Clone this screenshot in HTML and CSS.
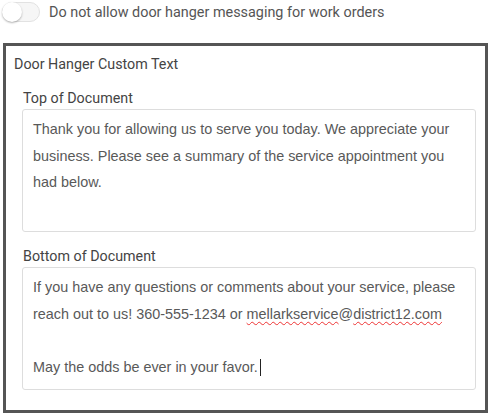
FILE: index.html
```html
<!DOCTYPE html>
<html lang="en">
<head>
    <meta charset="UTF-8">
    <title>Door Hanger Settings</title>
    <link rel="stylesheet" href="styles.css">
</head>
<body>
    <!-- Toggle row -->
    <div class="toggle-row">
        <span class="switch"><span class="knob"></span></span>
        <span class="toggle-label">Do not allow door hanger messaging for work orders</span>
    </div>

    <!-- Custom text panel -->
    <div class="panel">
        <div class="panel-title">Door Hanger Custom Text</div>

        <div class="field">
            <label>Top of Document</label>
            <div class="textbox">Thank you for allowing us to serve you today. We appreciate your business. Please see a summary of the service appointment you had below.</div>
        </div>

        <div class="field">
            <label>Bottom of Document</label>
            <div class="textbox">If you have any questions or comments about your service, please reach out to us! 360-555-1234 or <span class="email"><span class="misspelled">mellarkservice</span>@<span class="misspelled">district12.com</span></span><br><br>May the odds be ever in your favor.<span class="caret"></span></div>
        </div>
    </div>
</body>
</html>
```

FILE: styles.css
```css
body {
    margin: 0;
    background: #fff;
    font-family: Roboto, "Liberation Sans", sans-serif;
    color: #444;
}

.toggle-row {
    display: flex;
    align-items: center;
    gap: 9px;
    height: 24px;
    padding: 0 0 0 2px;
}

.switch {
    width: 38px;
    height: 20px;
    border: 1px solid #e2e2e2;
    border-radius: 11px;
    background: #f6f6f6;
    box-sizing: border-box;
    position: relative;
}

.knob {
    position: absolute;
    left: -1px;
    top: -1px;
    width: 20px;
    height: 20px;
    border-radius: 50%;
    background: #fff;
    box-shadow: 0 1px 2px rgba(0, 0, 0, 0.3);
}

.toggle-label {
    font-size: 14.4px;
    color: #555;
}

.panel {
    margin: 19px 0 0 3px;
    width: 485px;
    box-sizing: border-box;
    border: 3px solid #555;
    padding: 10px 9px 20px 16px;
}

.panel-title {
    font-size: 14.3px;
    margin-left: -8px;
    line-height: 16px;
}

.field {
    margin-top: 18px;
}

.field + .field {
    margin-top: 16px;
}

.field label {
    display: block;
    font-size: 14.3px;
    line-height: 16px;
    margin: 0 0 3px 1px;
}

.textbox {
    height: 123px;
    box-sizing: border-box;
    border: 1px solid #ddd;
    border-radius: 3px;
    padding: 6px 10px;
    font-family: "Liberation Sans", Arial, sans-serif;
    font-size: 14.4px;
    line-height: 26.5px;
    color: #595959;
}

.email {
    white-space: nowrap;
}

.misspelled {
    text-decoration: underline wavy #e33;
    text-decoration-thickness: 1px;
    text-underline-offset: 2px;
}

.caret {
    display: inline-block;
    width: 1px;
    height: 17px;
    background: #222;
    margin-left: 2px;
    vertical-align: -4px;
}
```
